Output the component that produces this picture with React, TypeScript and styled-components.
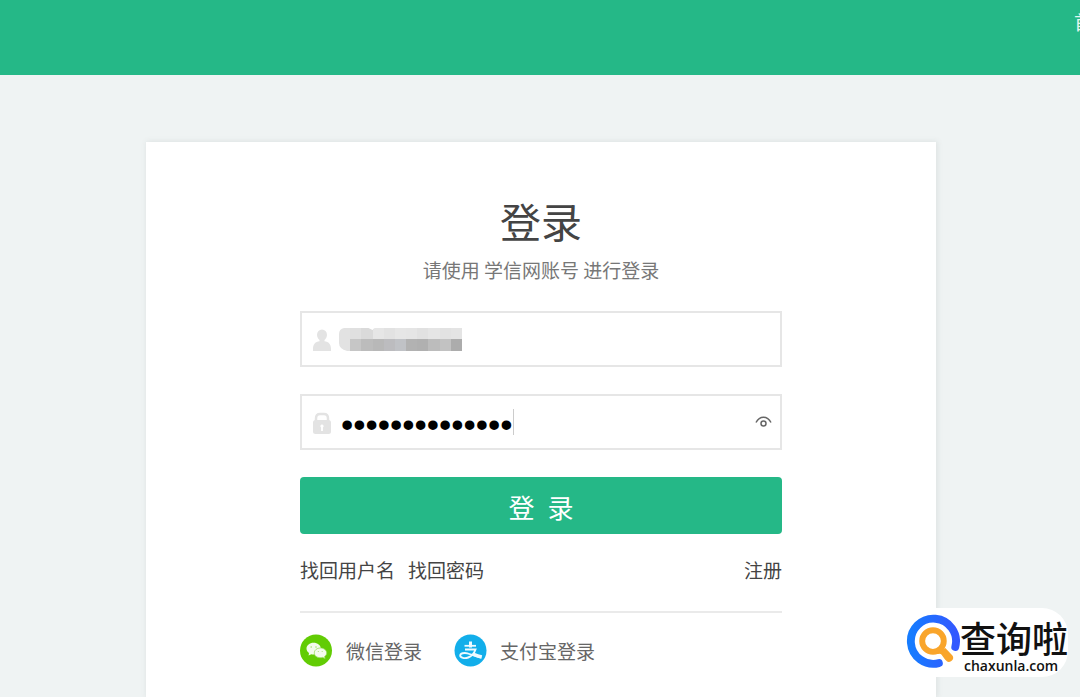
import React from "react";
import styled, { createGlobalStyle } from "styled-components";

const GlobalStyle = createGlobalStyle`
  * { box-sizing: border-box; }
  body {
    margin: 0;
    background: #eff3f3;
    font-family: "Noto Sans CJK SC", sans-serif;
    font-size: 19px;
    line-height: 28px;
    color: #444;
  }
  a { color: inherit; text-decoration: none; }
`;

const Page = styled.div`
  position: relative;
  display: flex;
  flex-direction: column;
  min-height: 100vh;
  overflow: hidden;
`;

const Header = styled.header`
  display: flex;
  justify-content: flex-end;
  height: 75px;
  padding-top: 8px;
  background: #25b887;
`;

const Nav = styled.nav`
  margin-right: -32px;
  color: #e4f7f0;
  white-space: nowrap;
`;

const Main = styled.main`
  display: flex;
  flex: 1;
  justify-content: center;
  padding: 67px 144px 0 146px;
`;

const Card = styled.section`
  flex: 1;
  min-width: 0;
  max-width: 960px;
  padding: 48px 154px 28px;
  background: #fff;
  box-shadow: 1px 0 5px 1px #dfe4e4;
`;

const Title = styled.h1`
  margin: 0;
  font-size: 41px;
  font-weight: 400;
  line-height: 60px;
  text-align: center;
  color: #444;
`;

const Subtitle = styled.p`
  margin: 6px 0 27px;
  text-align: center;
  color: #777;
`;

const Field = styled.label`
  position: relative;
  display: flex;
  align-items: center;
  height: 56px;
  margin-bottom: 27px;
  padding: 2px 8px 0 11px;
  border: 2px solid #e6e6e6;
`;

const Input = styled.input`
  flex: 1;
  width: 100%;
  min-width: 0;
  height: 44px;
  padding: 0 0 0 10px;
  border: 0;
  outline: 0;
  background: transparent;
  color: #000;
  font-family: "Noto Sans CJK SC", sans-serif;
  font-size: 19px;

  &[type="password"] {
    padding-top: 3px;
    font-family: "Liberation Sans", sans-serif;
    font-size: 35px;
  }
`;

const Mosaic = styled.svg`
  position: absolute;
  left: 37px;
  top: 14px;
`;

const Caret = styled.span`
  position: absolute;
  left: 211px;
  top: 13px;
  width: 1px;
  height: 26px;
  background: #ccc;
`;

const EyeButton = styled.button`
  display: flex;
  padding: 0;
  border: 0;
  background: transparent;
`;

const Submit = styled.button`
  display: block;
  width: 100%;
  height: 57px;
  padding: 2px 0 0;
  border: 0;
  border-radius: 4px;
  background: #25b887;
  color: #fff;
  font-family: inherit;
  font-size: 26px;
  line-height: 54px;
`;

const Links = styled.div`
  display: flex;
  gap: 13px;
  padding: 22px 0 27px;
  border-bottom: 2px solid #eaeaea;
`;

const Register = styled.a`
  margin-left: auto;
`;

const Social = styled.div`
  display: flex;
  gap: 32px;
  padding-top: 21px;
  color: #666;
`;

const SocialLink = styled.a`
  display: flex;
  align-items: center;
  gap: 13px;
  height: 33px;
  white-space: nowrap;
`;

const Watermark = styled.aside`
  position: absolute;
  right: 12px;
  bottom: 20px;
  display: flex;
  width: 162px;
  height: 69px;
  border-radius: 0 26px 26px 0;
  background: #fff;
  color: #111;
`;

const MarkText = styled.div`
  display: flex;
  flex-direction: column;
`;

const MarkName = styled.span`
  padding-top: 9px;
  font-size: 36px;
  font-weight: 500;
  line-height: 40px;
  white-space: nowrap;
`;

const MarkDomain = styled.span`
  padding-left: 4px;
  font-family: "Open Sans", sans-serif;
  font-size: 14px;
  font-weight: 600;
  line-height: 18px;
`;

const mosaicTop = ["#e2e2e2", "#e0e0e0", "#dadada", "#e6e6e6", "#e2e2e2", "#e6e6e6", "#e5e5e5", "#e1e1e1", "#e5e5e5", "#e2e2e2", "#e4e4e4"];
const mosaicBottom = ["#e2e2e2", "#c6c6c6", "#bcbcbc", "#b8b8b8", "#bcbcbf", "#c0c2c6", "#b2b2b2", "#b0b0b0", "#bcbcbc", "#c2c2c2", "#acacac"];

function UserIcon() {
  return (
    <svg width="18" height="23" viewBox="0 0 18 23" fill="#e3e3e3" aria-hidden="true">
      <ellipse cx="9" cy="6" rx="5" ry="5.5" />
      <path d="M6.500 10h5v2.200c4 .5 6.500 2.800 6.500 7.800v2H0v-2c0-5 2.500-7.300 6.500-7.800z" />
    </svg>
  );
}

function LockIcon() {
  return (
    <svg width="18" height="23" viewBox="0 0 18 23" aria-hidden="true">
      <path d="M3 10V6.500Q3 2 7 2h4q4 0 4 4.500V10" fill="none" stroke="#e3e3e3" strokeWidth="2.500" />
      <rect y="8" width="18" height="14" rx="2.500" fill="#e3e3e3" />
      <path d="M9 12.500a1.700 1.700 0 0 1 .9 3.100V19H8.100v-3.400A1.700 1.700 0 0 1 9 12.500z" fill="#fff" />
    </svg>
  );
}

function EyeIcon() {
  return (
    <svg width="17" height="16" viewBox="0 0 17 16" fill="none" stroke="#666" strokeWidth="1.500" aria-hidden="true">
      <path d="M1 7.500C2.800 4 5.400 2.200 8.500 2.200S14.200 4 16 7.500" />
      <circle cx="8.500" cy="8.500" r="2.500" />
    </svg>
  );
}

function WechatIcon() {
  return (
    <svg width="33" height="33" viewBox="0 0 33 33" aria-hidden="true">
      <circle cx="16" cy="16.500" r="16" fill="#62cc04" />
      <path d="M13.500 8.800c4 0 7.300 2.500 7.300 5.800s-3.300 5.900-7.300 5.900c-.8 0-1.500-.1-2.200-.3L8.600 21.600l.4-2.500C7.300 18 6.500 16.500 6.500 14.600c0-3.300 3.300-5.800 7-5.800z" fill="#f4fbed" />
      <path d="M20.300 14c3.500 0 6.400 2.100 6.400 4.900 0 1.500-.8 2.700-2.100 3.600l.5 2-2.500-1.100c-.7.200-1.400.3-2.300.3-3.400 0-6-2.100-6-4.800s2.600-4.900 6-4.900z" fill="#f4fbed" stroke="#8fda4c" strokeWidth=".7" />
      <g fill="#a5e070">
        <circle cx="11.200" cy="13" r=".8" />
        <circle cx="16" cy="13" r=".8" />
        <circle cx="18.300" cy="17.500" r=".6" />
        <circle cx="22.200" cy="17.500" r=".6" />
      </g>
    </svg>
  );
}

function AlipayIcon() {
  return (
    <svg width="33" height="33" viewBox="0 0 33 33" fill="none" stroke="#eefaff" aria-hidden="true">
      <circle cx="16.500" cy="16.500" r="16" fill="#12aeea" stroke="none" />
      <path d="M10.500 11.800h11.500" strokeWidth="1.800" />
      <path d="M16.500 7.500v6" strokeWidth="3" />
      <path d="M11 15.500h10.500c-1.200 3.500-3.800 6.600-7.300 8-3.400 1.300-8 .5-8-1.900 0-2.300 4-3.200 7.200-2.300 4.200 1.200 8.800 3.500 13.600 4.200" strokeWidth="1.900" />
      <path d="M19 20c3 1.300 5.500 2.300 8.800 3" strokeWidth="3.400" />
    </svg>
  );
}

function MarkLogo() {
  return (
    <svg width="55" height="69" viewBox="0 0 55 69" fill="none" strokeLinecap="round" aria-hidden="true">
      <defs>
        <linearGradient id="ring" x1="0" y1="0" x2="1" y2="0">
          <stop offset="0" stopColor="#167cff" />
          <stop offset="1" stopColor="#3358ff" />
        </linearGradient>
      </defs>
      <path d="M33.500 55.500A23 23 0 1 1 50.200 39" stroke="url(#ring)" strokeWidth="8" />
      <circle cx="27.500" cy="33" r="11" stroke="#f9a52b" strokeWidth="6" />
      <path d="M32 45.500C37 44 37 48 41 52A3.200 3.200 0 0 0 46.500 48L40 41z" fill="#f9a52b" stroke="#f9a52b" strokeWidth="1.500" strokeLinejoin="round" />
    </svg>
  );
}

export default function App() {
  return (
    <Page>
      <GlobalStyle />
      <Header>
        <Nav><a href="#home">首页</a></Nav>
      </Header>
      <Main>
        <Card>
          <Title>登录</Title>
          <Subtitle>请使用 学信网账号 进行登录</Subtitle>
          <form onSubmit={(e) => e.preventDefault()}>
            <Field>
              <UserIcon />
              <Input type="text" aria-label="用户名" />
              <Mosaic width="123" height="24" viewBox="0 0 121 24" preserveAspectRatio="none" shapeRendering="crispEdges" aria-hidden="true">
                <clipPath id="smudge"><path d="M5 1h24l4 2 2-2h86v23H8Q0 22 0 16V7Q0 2 5 1z" /></clipPath>
                <g clipPath="url(#smudge)">
                  {mosaicTop.map((c, i) => <rect key={i} x={i * 11} y="0" width="12" height="12" fill={c} />)}
                  {mosaicBottom.map((c, i) => <rect key={i} x={i * 11} y="12" width="12" height="12" fill={c} />)}
                </g>
              </Mosaic>
            </Field>
            <Field>
              <LockIcon />
              <Input type="password" aria-label="密码" defaultValue="abcdefghijklmn" />
              <Caret />
              <EyeButton type="button" aria-label="显示密码"><EyeIcon /></EyeButton>
            </Field>
            <Submit type="submit">登&ensp;录</Submit>
          </form>
          <Links>
            <a href="#username">找回用户名</a>
            <a href="#password">找回密码</a>
            <Register href="#register">注册</Register>
          </Links>
          <Social>
            <SocialLink href="#wechat"><WechatIcon />微信登录</SocialLink>
            <SocialLink href="#alipay"><AlipayIcon />支付宝登录</SocialLink>
          </Social>
        </Card>
      </Main>
      <Watermark>
        <MarkLogo />
        <MarkText>
          <MarkName>查询啦</MarkName>
          <MarkDomain>chaxunla.com</MarkDomain>
        </MarkText>
      </Watermark>
    </Page>
  );
}
